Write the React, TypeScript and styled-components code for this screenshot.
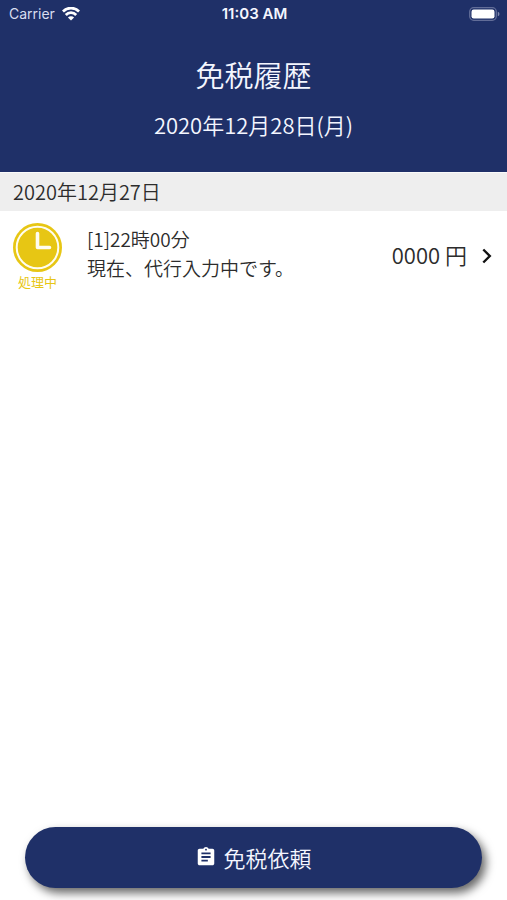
import React from "react";
import styled, { createGlobalStyle } from "styled-components";

const navy = "#1f3068";
const gold = "#e7c614";

const GlobalStyle = createGlobalStyle`
  * { box-sizing: border-box; }
  body {
    margin: 0;
    background: #fff;
    color: #2c2c2c;
    font-family: "Noto Sans CJK JP", "Noto Sans", sans-serif;
    font-weight: 350;
  }
  h1, h2, p { margin: 0; font-weight: inherit; }
`;

const Screen = styled.div`
  display: flex;
  flex-direction: column;
  min-height: 100vh;
`;

const Header = styled.header`
  background: ${navy};
  color: #f4f6ff;
  text-align: center;
  padding-bottom: 30px;
`;

const StatusBar = styled.div`
  display: grid;
  grid-template-columns: 1fr auto 1fr;
  align-items: center;
  height: 28px;
  padding: 0 7px 0 9px;
  font-family: Inter, sans-serif;
  font-size: 14px;
  line-height: 20px;
`;

const Carrier = styled.div`
  display: flex;
  align-items: center;
  gap: 7px;
  color: #d9def0;
  font-weight: 400;
`;

const Clock = styled.time`
  font-size: 15px;
  font-weight: 600;
`;

const Battery = styled.svg`
  justify-self: end;
`;

const Title = styled.h1`
  margin-top: 24px;
  font-size: 29px;
  line-height: 44px;
`;

const Today = styled.p`
  margin-top: 10px;
  font-size: 22px;
  line-height: 36px;
`;

const DayHeading = styled.h2`
  background: #eee;
  border-top: 1px solid #fafafa;
  padding: 0 13px;
  font-size: 20px;
  line-height: 38px;
`;

const History = styled.main`
  flex: 1;
`;

const Entry = styled.a`
  display: flex;
  align-items: center;
  padding: 12px 12px 6px 13px;
  color: inherit;
  text-decoration: none;
`;

const Status = styled.div`
  display: flex;
  flex-direction: column;
  align-items: center;
  width: 49px;
  margin-right: 25px;
  color: ${gold};
  font-size: 13px;
  font-weight: 400;
  line-height: 20px;
`;

const Detail = styled.div`
  flex: 1;
  padding-bottom: 9px;
  font-size: 19px;
  line-height: 29px;
`;

const Amount = styled.div`
  margin-right: 12px;
  padding-bottom: 7px;
  font-size: 22px;
  line-height: 32px;
`;

const Chevron = styled.svg`
  margin-bottom: 3px;
`;

const Footer = styled.footer`
  padding: 0 25px 12px;
`;

const RequestButton = styled.button`
  display: flex;
  align-items: center;
  justify-content: center;
  gap: 6px;
  width: 100%;
  height: 61px;
  padding: 0 0 2px;
  border: 0;
  border-radius: 31px;
  background: ${navy};
  box-shadow: 4px 5px 10px rgba(0, 0, 0, 0.6);
  color: #f4f6ff;
  font: inherit;
  font-size: 22px;
  line-height: 32px;
  cursor: pointer;
`;

const WifiIcon = () => (
  <svg width="18" height="14" viewBox="0 0 18 14" fill="none" stroke="#fff" strokeWidth="2.8" aria-hidden="true">
    <path d="M.9 4.5a11.4 11.4 0 0 1 16.2 0" />
    <path d="M3.8 7.9a7.3 7.3 0 0 1 10.4 0" />
    <path d="M9 13.6 5.9 10.5a4.4 4.4 0 0 1 6.2 0z" fill="#fff" stroke="none" />
  </svg>
);

const BatteryIcon = () => (
  <Battery width="31" height="14" viewBox="0 0 31 14" aria-hidden="true">
    <rect x=".7" y=".7" width="26.6" height="12.6" rx="4" fill="none" stroke="#626d98" strokeWidth="1.3" />
    <rect x="2.5" y="2.5" width="23" height="9" rx="2.2" fill="#fff" />
    <path d="M28.8 4.8q1.7.5 1.7 2.2t-1.7 2.2z" fill="#8089ad" />
  </Battery>
);

const PendingIcon = () => (
  <svg width="49" height="49" viewBox="0 0 49 49" aria-hidden="true">
    <circle cx="24.5" cy="24.5" r="24.5" fill={gold} />
    <circle cx="24.5" cy="24.5" r="20.8" fill="none" stroke="#fffdf0" strokeWidth="2" />
    <path d="M24.5 10.5v14h12" fill="none" stroke="#fffdf0" strokeWidth="3.6" strokeLinecap="round" strokeLinejoin="round" />
  </svg>
);

const ChevronIcon = () => (
  <Chevron width="16" height="20" viewBox="0 0 16 20" fill="none" stroke="#111" strokeWidth="2.4" aria-hidden="true">
    <path d="m4.3 3.5 6.5 6.5-6.5 6.5" />
  </Chevron>
);

const ClipboardIcon = () => (
  <svg width="22" height="22" viewBox="0 0 24 24" fill="#fff" aria-hidden="true">
    <path d="M19 3h-4.18C14.4 1.84 13.3 1 12 1s-2.4.84-2.82 2H5c-1.1 0-2 .9-2 2v14c0 1.1.9 2 2 2h14c1.1 0 2-.9 2-2V5c0-1.1-.9-2-2-2zm-7 0c.55 0 1 .45 1 1s-.45 1-1 1-1-.45-1-1 .45-1 1-1zm2 14H7v-2h7v2zm3-4H7v-2h10v2zm0-4H7V7h10v2z" />
  </svg>
);

export default function App() {
  return (
    <Screen>
      <GlobalStyle />
      <Header>
        <StatusBar>
          <Carrier>
            Carrier
            <WifiIcon />
          </Carrier>
          <Clock>11:03 AM</Clock>
          <BatteryIcon />
        </StatusBar>
        <Title>免税履歴</Title>
        <Today>2020年12月28日(月)</Today>
      </Header>
      <History>
        <DayHeading>2020年12月27日</DayHeading>
        <Entry href="#entry-1">
          <Status>
            <PendingIcon />
            処理中
          </Status>
          <Detail>
            <p>[1]22時00分</p>
            <p>現在、代行入力中です。</p>
          </Detail>
          <Amount>0000 円</Amount>
          <ChevronIcon />
        </Entry>
      </History>
      <Footer>
        <RequestButton type="button">
          <ClipboardIcon />
          免税依頼
        </RequestButton>
      </Footer>
    </Screen>
  );
}
